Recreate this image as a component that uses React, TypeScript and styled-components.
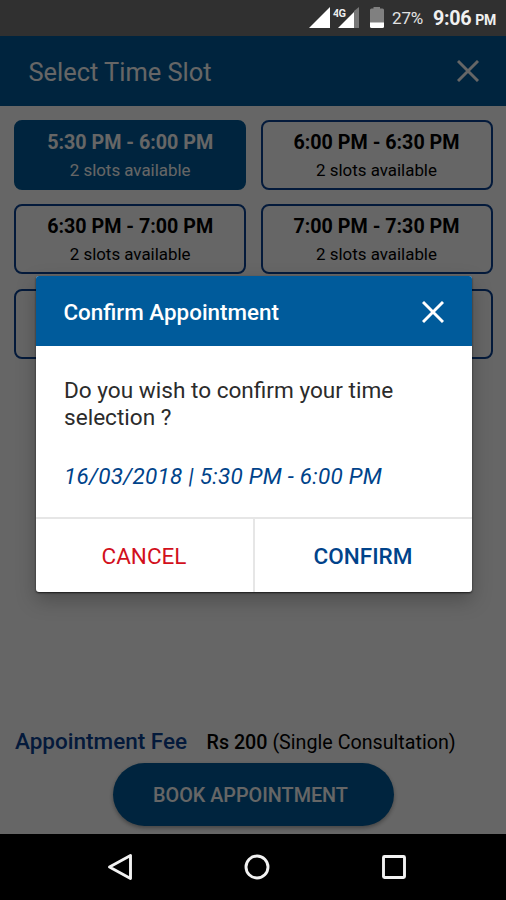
import React from "react";
import styled, { createGlobalStyle } from "styled-components";

const BLUE = "#005b9b";
const NAVY = "#00438a";
const OUTLINE = "#0a4394";

const GlobalStyle = createGlobalStyle`
  * { box-sizing: border-box; }
  html, body { margin: 0; padding: 0; background: #000; }
  body { font-family: Roboto, "Noto Sans", sans-serif; }
  button { font: inherit; border: 0; padding: 0; background: none; cursor: pointer; }
  svg { display: block; flex: none; }
`;

const Phone = styled.div`
  display: flex;
  flex-direction: column;
  width: 506px;
  height: 900px;
  overflow: hidden;
`;

const StatusBar = styled.div`
  display: flex;
  align-items: center;
  justify-content: flex-end;
  height: 36px;
  flex: none;
  padding-right: 10px;
  background: #303030;
  color: #f0f0f0;
`;

const BatteryText = styled.span`
  margin-left: 7px;
  font-size: 17px;
  color: #e2e2e2;
  line-height: 38px;
  width: 31px;
  white-space: nowrap;
  letter-spacing: -0.2px;
`;

const Clock = styled.span`
  display: flex;
  align-items: baseline;
  gap: 4px;
  margin-left: 10px;
  font-size: 19.7px;
  font-weight: 700;
  line-height: 40px;
  padding-top: 3px;
  white-space: nowrap;
  letter-spacing: -0.3px;
`;

const Meridiem = styled.small`
  font-size: 14px;
`;

const Screen = styled.main`
  position: relative;
  display: flex;
  flex-direction: column;
  flex: 1;
  background: #fff;
`;

const TitleBar = styled.header<{ $dialog?: boolean }>`
  display: flex;
  align-items: center;
  justify-content: space-between;
  height: ${(p) => (p.$dialog ? 70 : 69.5)}px;
  flex: none;
  padding: ${(p) => (p.$dialog ? "1px 28px 0" : "1px 27px 0 28.500px")};
  background: ${BLUE};
  color: #fff;
`;

const Title = styled.h1<{ $size: number; $medium?: boolean }>`
  margin: 0;
  padding-top: ${(p) => (p.$medium ? 1 : 2)}px;
  font-size: ${(p) => p.$size}px;
  font-weight: ${(p) => (p.$medium ? 500 : 400)};
  line-height: 30px;
`;

const SlotGrid = styled.section`
  display: grid;
  grid-template-columns: 1fr 1fr;
  grid-auto-rows: 70px;
  gap: 14.4px;
  padding: 14.5px 13.500px 0 14.2px;
`;

const Slot = styled.button<{ $selected?: boolean }>`
  display: flex;
  flex-direction: column;
  align-items: center;
  padding-top: 9px;
  border: 2px solid ${(p) => (p.$selected ? BLUE : OUTLINE)};
  border-radius: 8px;
  background: ${(p) => (p.$selected ? BLUE : "transparent")};
  color: ${(p) => (p.$selected ? "#fff" : "#000")};
`;

const SlotTime = styled.span`
  font-size: 19.7px;
  font-weight: 700;
  line-height: 24px;
`;

const SlotCount = styled.span`
  margin-top: 4px;
  font-size: 16.9px;
  line-height: 22px;
`;

const Footer = styled.footer`
  display: flex;
  flex-direction: column;
  align-items: center;
  margin-top: auto;
  padding-bottom: 8px;
`;

const FeeRow = styled.div`
  display: flex;
  align-items: baseline;
  align-self: stretch;
  padding-left: 15px;
  margin-bottom: 6px;
  line-height: 28px;
  white-space: nowrap;
`;

const FeeLabel = styled.span`
  width: 191.5px;
  font-size: 22.5px;
  font-weight: 500;
  color: ${OUTLINE};
`;

const FeeValue = styled.span`
  font-size: 19.7px;
  color: #000;
`;

const Amount = styled.b`
  font-weight: 500;
`;

const BookButton = styled.button`
  width: 281px;
  height: 63px;
  padding-top: 2px;
  border-radius: 32px;
  background: ${BLUE};
  color: #fff;
  font-size: 19.8px;
  font-weight: 500;
  text-indent: -5px;
  box-shadow: 0 2px 4px rgba(0, 0, 0, 0.35);
`;

const Scrim = styled.div`
  position: absolute;
  inset: 0;
  display: flex;
  align-items: flex-start;
  padding: 240.4px 34.5px 0 35.5px;
  background: rgba(0, 0, 0, 0.6);
`;

const Dialog = styled.section`
  flex: 1;
  overflow: hidden;
  border-radius: 3px;
  background: #fff;
  box-shadow: 0 1px 2px rgba(0, 0, 0, 0.7), 0 8px 20px rgba(0, 0, 0, 0.25);
`;

const DialogBody = styled.div`
  height: 171px;
  padding: 32px 28.5px 0;
`;

const Message = styled.p`
  margin: 0;
  font-size: 22.6px;
  line-height: 26.5px;
  color: #2b2b2b;
`;

const Selection = styled.p`
  margin: 32px 0 0;
  font-size: 22.5px;
  letter-spacing: 0.25px;
  line-height: 26px;
  font-style: italic;
  color: ${NAVY};
`;

const Actions = styled.div`
  display: grid;
  grid-template-columns: 217px 1fr;
  border-top: 2px solid #e6e6e6;
  height: 74.5px;
`;

const Action = styled.button<{ $primary?: boolean }>`
  padding-top: 1px;
  font-size: 22.5px;
  font-weight: ${(p) => (p.$primary ? 500 : 400)};
  color: ${(p) => (p.$primary ? NAVY : "#d2101c")};
  & + & { border-left: 2px solid #e6e6e6; }
`;

const NavBar = styled.nav`
  display: flex;
  align-items: center;
  justify-content: space-between;
  height: 66.5px;
  flex: none;
  padding: 0 98px 0 106px;
  background: #000;
`;

const CloseIcon = () => (
  <svg width="22" height="22" viewBox="0 0 22 22" fill="none" stroke="#fff" strokeWidth="2.9">
    <path d="M1 1 21 21M21 1 1 21" />
  </svg>
);

const StatusIcons = () => (
  <svg width="76" height="24" viewBox="0 0 76 24">
    <path d="M0 22 21 1V22Z" fill="#fff" />
    <path d="M45 5 50 1V22H45Z" fill="#777" />
    <path d="M29 22 45 6V22Z" fill="#fff" />
    <text x="24" y="11" fontSize="11" textLength="13" fontWeight="700" fill="#eee" stroke="#303030" strokeWidth="2" paintOrder="stroke" fontFamily="Roboto">4G</text>
    <path d="M61 4Q61 2.500 62.500 2.500H64.500V1H71V2.500H73.500Q75 2.500 75 4V17H61Z" fill="#808080" />
    <path d="M61 16.500H75V20.500Q75 22 73.500 22H62.500Q61 22 61 20.500Z" fill="#fff" />
  </svg>
);

const NavIcon = ({ children }: { children: React.ReactNode }) => (
  <svg width="28" height="28" viewBox="0 0 28 28" fill="none" stroke="#f2f2f2" strokeWidth="2.900" strokeLinejoin="round">
    {children}
  </svg>
);

const slots = [
  "5:30 PM - 6:00 PM",
  "6:00 PM - 6:30 PM",
  "6:30 PM - 7:00 PM",
  "7:00 PM - 7:30 PM",
];

export default function App() {
  return (
    <Phone>
      <GlobalStyle />
      <StatusBar>
        <StatusIcons />
        <BatteryText>27%</BatteryText>
        <Clock>9:06<Meridiem>PM</Meridiem></Clock>
      </StatusBar>
      <Screen>
        <TitleBar>
          <Title $size={25.4}>Select Time Slot</Title>
          <CloseIcon />
        </TitleBar>
        <SlotGrid>
          {slots.map((time, i) => (
            <Slot key={time} $selected={i === 0}>
              <SlotTime>{time}</SlotTime>
              <SlotCount>2 slots available</SlotCount>
            </Slot>
          ))}
          <Slot />
          <Slot />
        </SlotGrid>
        <Footer>
          <FeeRow>
            <FeeLabel>Appointment Fee</FeeLabel>
            <FeeValue><Amount>Rs 200</Amount> (Single Consultation)</FeeValue>
          </FeeRow>
          <BookButton>BOOK APPOINTMENT</BookButton>
        </Footer>
        <Scrim>
          <Dialog>
            <TitleBar $dialog>
              <Title as="h2" $size={22.4} $medium>Confirm Appointment</Title>
              <CloseIcon />
            </TitleBar>
            <DialogBody>
              <Message>Do you wish to confirm your time selection ?</Message>
              <Selection>16/03/2018 | 5:30 PM - 6:00 PM</Selection>
            </DialogBody>
            <Actions>
              <Action>CANCEL</Action>
              <Action $primary>CONFIRM</Action>
            </Actions>
          </Dialog>
        </Scrim>
      </Screen>
      <NavBar>
        <NavIcon><path d="M3.500 14 24.500 2.500V25.500Z" /></NavIcon>
        <NavIcon><circle cx="14" cy="14" r="11" /></NavIcon>
        <NavIcon><rect x="3.500" y="3.500" width="21" height="21" rx="1" /></NavIcon>
      </NavBar>
    </Phone>
  );
}
